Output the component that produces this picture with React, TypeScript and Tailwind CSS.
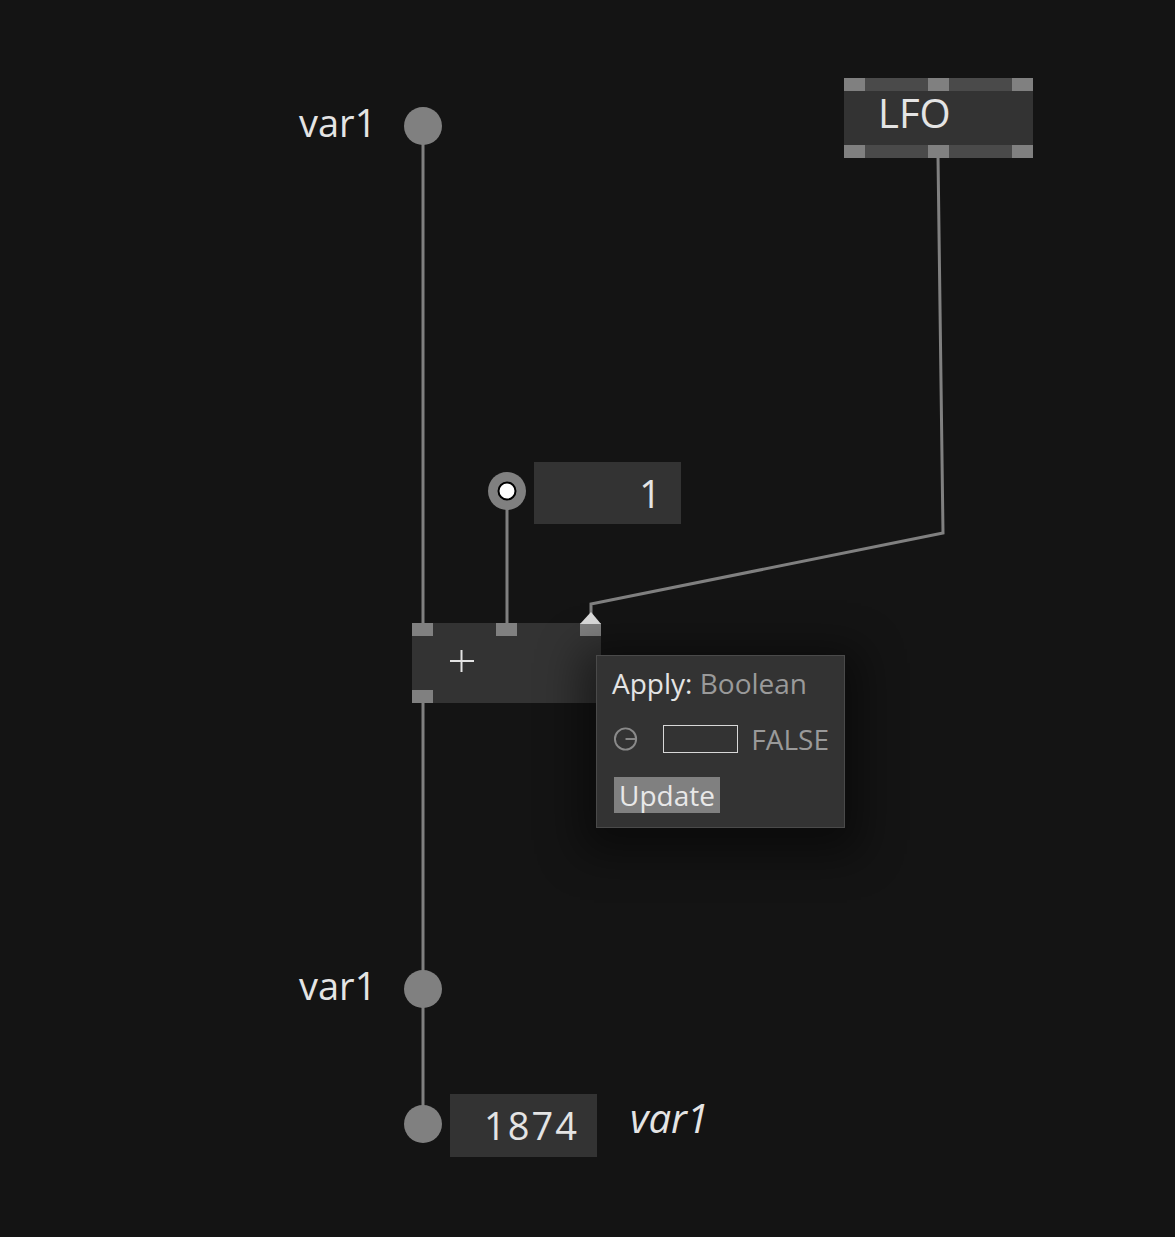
import React from 'react';

const font = { fontFamily: '"Open Sans", "DejaVu Sans", sans-serif' };

function Port({ className }: { className: string }) {
  return <div className={`absolute w-[21px] h-[13px] bg-[#808080] ${className}`} />;
}

function Dot({ x, y }: { x: number; y: number }) {
  return <circle cx={x} cy={y} r={19} fill="#808080" />;
}

export default function App() {
  return (
    <div className="relative w-[1175px] h-[1237px] bg-[#141414] overflow-hidden text-[#e4e4e4]" style={font}>
      {/* wires + sockets */}
      <svg className="absolute inset-0" width={1175} height={1237}>
        <line x1={423} y1={126} x2={423} y2={624} stroke="#808080" strokeWidth={3} />
        <line x1={423} y1={700} x2={423} y2={1124} stroke="#808080" strokeWidth={3} />
        <line x1={507} y1={491} x2={507} y2={624} stroke="#808080" strokeWidth={3} />
        <polyline points="938,156 943,533 591,604 591,614" fill="none" stroke="#808080" strokeWidth={3} />
        <Dot x={423} y={126} />
        <Dot x={423} y={989} />
        <Dot x={423} y={1124} />
        <Dot x={507} y={491} />
        <circle cx={507} cy={491} r={8.5} fill="#fff" stroke="#000" strokeWidth={2} />
      </svg>

      {/* var1 getter */}
      <div className="absolute left-[299px] top-[97px] text-[38px] leading-[50px]">var1</div>

      {/* LFO */}
      <div className="absolute left-[844px] top-[78px] w-[189px] h-[80px] bg-[#333333]">
        <div className="absolute left-0 right-0 top-0 h-[13px] bg-[#4a4a4a]" />
        <div className="absolute left-0 right-0 bottom-0 h-[13px] bg-[#4a4a4a]" />
        <Port className="left-0 top-0" />
        <Port className="left-[84px] top-0" />
        <Port className="right-0 top-0" />
        <Port className="left-0 bottom-0" />
        <Port className="left-[84px] bottom-0" />
        <Port className="right-0 bottom-0" />
        <div className="absolute left-[34px] top-[10px] text-[40px] leading-[50px]">LFO</div>
      </div>

      {/* value 1 */}
      <div className="absolute left-[534px] top-[462px] w-[147px] h-[62px] bg-[#333333] flex items-center justify-end pr-[20px] text-[38px]">
        1
      </div>

      {/* + node */}
      <div className="absolute left-[412px] top-[623px] w-[189px] h-[80px] bg-[#333333]">
        <Port className="left-0 top-0" />
        <Port className="left-[84px] top-0" />
        <Port className="right-0 top-0" />
        <Port className="left-0 bottom-0" />
        <svg className="absolute left-[38px] top-[27px]" width={24} height={24}>
          <line x1={0} y1={11} x2={24} y2={11} stroke="#e4e4e4" strokeWidth={2} />
          <line x1={11.5} y1={0} x2={11.5} y2={22} stroke="#e4e4e4" strokeWidth={2} />
        </svg>
        <svg className="absolute left-[168px] top-[-11px]" width={21} height={12}>
          <polygon points="0,12 21,12 11,0" fill="#dcdcdc" />
        </svg>
      </div>

      {/* tooltip */}
      <div className="absolute left-[596px] top-[655px] w-[249px] h-[173px] bg-[#333333] border border-[#4a4a4a] shadow-[0_10px_40px_16px_rgba(0,0,0,0.45)] px-[15px] pt-[7px]">
        <div className="text-[28px] leading-[40px]">
          Apply: <span className="text-[#9a9a9a]">Boolean</span>
        </div>
        <div className="flex items-center mt-[16px] h-[40px]">
          <svg width={26} height={26} viewBox="0 0 26 26" className="ml-[1px]">
            <circle cx={13} cy={13} r={11} fill="none" stroke="#8a8a8a" strokeWidth={2} />
            <line x1={13} y1={13} x2={24} y2={13} stroke="#8a8a8a" strokeWidth={2} />
          </svg>
          <div className="ml-[25px] w-[78px] h-[28px] border border-[#d8d8d8]" />
          <div className="ml-[13px] text-[28px] text-[#9a9a9a] leading-none">FALSE</div>
        </div>
        <div className="mt-[18px] ml-[2px] inline-block bg-[#808080] px-[5px] text-[28px] leading-[36px] text-[#e8e8e8]">
          Update
        </div>
      </div>

      {/* var1 setter */}
      <div className="absolute left-[299px] top-[960px] text-[38px] leading-[50px]">var1</div>

      {/* output */}
      <div className="absolute left-[450px] top-[1094px] w-[147px] h-[63px] bg-[#333333] flex items-center justify-end pr-[18px] text-[38px] tracking-[2px]">
        1874
      </div>
      <div className="absolute left-[630px] top-[1093px] text-[40px] leading-[50px] italic">var1</div>
    </div>
  );
}
